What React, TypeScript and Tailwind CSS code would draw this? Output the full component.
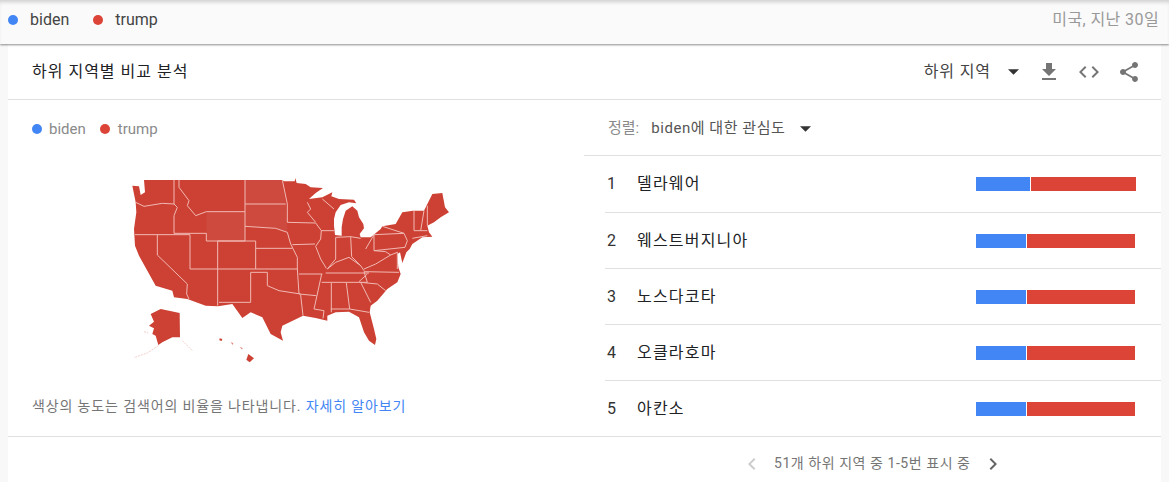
import React from "react";

const regions = [
  { name: "델라웨어", blue: 54, red: 105 },
  { name: "웨스트버지니아", blue: 50, red: 108 },
  { name: "노스다코타", blue: 50, red: 108 },
  { name: "오클라호마", blue: 50, red: 108 },
  { name: "아칸소", blue: 50, red: 108 },
];

const font = "font-['Roboto','Noto_Sans_CJK_KR',sans-serif]";

const Dot = ({ color }: { color: string }) => (
  <span className={`block w-[10px] h-[10px] rounded-full ${color}`} />
);

const Caret = () => (
  <svg width="11" height="6" viewBox="0 0 10 5" className="fill-[#333]">
    <path d="M0 0h10L5 5z" />
  </svg>
);

const stateLines = [
  "M165 33V105L175 115 165 140V193M50 100L75 112 130 103 165 105",
  "M180 33V55L210 95 205 110 230 140 262 128M48 197H213M165 193H262",
  "M262 128H378V216H262V193M378 33V128M378 105H500M490 33L505 105V160",
  "M378 172L470 178 505 190 515 225 535 265V300M296 216H410V300M410 238H520",
  "M115 197V258L205 345 203 375 210 390M213 197V300M296 216V410M213 300H535",
  "M395 310V400H300M395 310H445V350L480 365 545 375",
  "M505 160L590 162 607 185 605 210 590 232 605 270 622 298M520 227L588 225M540 315H610",
  "M565 100L575 120 565 130 590 160M607 185H645M650 205V270L625 300M610 90L645 120",
  "M535 300L540 375 592 380M545 378L552 440M585 420L615 425 612 448M608 315L595 375 585 420",
  "M620 312H750M608 340H745L735 308 840 310M720 338L745 315M625 300L650 280 690 265 725 290 735 305",
  "M650 205L695 203 725 208M695 203L698 263M765 197V245L800 248 815 258 770 285 735 300M725 290L698 263M740 240L765 197",
  "M637 342V430M682 342L692 420M635 420H692L750 430M725 340L775 345 800 365M725 340L755 400",
  "M765 197L855 193 865 215 858 235 765 245M790 172L855 193M885 125V185M915 125L905 185M925 110V170M885 185H925M880 208L925 200M835 250V300M815 258L835 250",
];

const UsMap = () => (
  <svg width="340" height="200" viewBox="0 0 1020 600" className="block">
    <path
      fill="#cd4134"
      d="M75 33H490L495 37H527L529 27 533 42 560 45 575 55 612 57 590 72 570 90 610 85 640 70 637 82 660 90 705 92 712 103 690 100 665 108 650 130 645 150 645 170 648 198 668 200 668 175 672 150 680 125 700 112 715 125 720 145 733 165 735 178 722 195 725 205 755 205 785 180 790 172 830 165 850 130 882 125H915L925 105 940 75 970 72 978 115 990 130 965 145 945 160 925 170 930 190 940 203 910 205 880 225 872 240 862 250 850 282 843 250 835 256 838 295 845 315 835 340 805 360 775 395 755 410 752 430 765 480 772 510 768 528 750 515 735 490 720 445 690 428 650 430 625 440 625 455 590 447 552 440 490 470 485 490 492 515 455 495 430 445 395 430 370 447 340 405 297 412 260 410 205 390 165 385 160 365 110 350 85 305 60 260 48 230 45 180 52 130 50 100 40 50 60 52 65 78 78 70Z"
    />
    <path
      fill="#cd4134"
      d="M95 435L125 420 182 432 183 505 160 505 130 520 118 528 110 500 100 495 105 478 90 470 105 458Z"
    />
    <path
      d="M118 530L85 552 45 566M190 515L220 545M75 488L88 492"
      fill="none"
      stroke="#eeb6b0"
      strokeWidth="2"
      strokeDasharray="6 3"
    />
    <path fill="#cd4134" d="M302 508L310 510 308 516 301 514ZM388 555L405 568 392 580 382 572Z" />
    <path fill="#e3867c" d="M335 520L343 522 341 528ZM362 533L372 538 368 541Z" />
    <path
      d="M378 33V105H500L490 33ZM262 128H378V216H262ZM378 105H500L505 160V190L470 178 378 172Z"
      fill="#ffffff"
      fillOpacity="0.05"
    />
    {stateLines.map((d) => (
      <path key={d} d={d} fill="none" stroke="#f0b9b3" strokeWidth="3" />
    ))}
  </svg>
);

export default function App() {
  return (
    <div className={`w-[1169px] h-[482px] overflow-hidden bg-[#f8f8f8] ${font}`}>
      {/* Top legend bar */}
      <div className="relative z-10 h-[44px] flex items-center justify-between pl-[8px] pr-[10px] bg-[#fafafa] shadow-[inset_0_4px_4px_-2px_rgba(0,0,0,0.18),0_1px_2px_rgba(0,0,0,0.45)]">
        <div className="flex items-center pb-[4px]">
          <Dot color="bg-[#4285f4]" />
          <span className="ml-[12px] text-[16px] text-[#444]">biden</span>
          <span className="ml-[24px]">
            <Dot color="bg-[#db4437]" />
          </span>
          <span className="ml-[12px] text-[16px] text-[#444]">trump</span>
        </div>
        <span className="text-[16px] tracking-[0.4px] text-[#999] pb-[5px]">미국, 지난 30일</span>
      </div>

      {/* Card */}
      <div className="mx-[8px] bg-white h-[438px]">
        <div className="h-[56px] flex items-center justify-between pl-[24px] pr-[20px] border-b border-[#e0e0e0]">
          <span className="text-[16px] tracking-[1px] text-[#202124]">하위 지역별 비교 분석</span>
          <div className="flex items-center">
            <span className="text-[16px] tracking-[0.9px] text-[#444]">하위 지역</span>
            <span className="ml-[17px]">
              <Caret />
            </span>
            <svg width="24" height="24" viewBox="0 0 24 24" className="ml-[18px] fill-[#757575]">
              <path d="M19 9h-4V3H9v6H5l7 7 7-7zM5 18v2h14v-2H5z" />
            </svg>
            <svg width="24" height="24" viewBox="0 0 24 24" className="ml-[16px] fill-[#757575]">
              <path d="M9.4 16.6L4.8 12l4.6-4.6L8 6l-6 6 6 6 1.4-1.4zm5.2 0l4.6-4.6-4.6-4.6L16 6l6 6-6 6-1.4-1.4z" />
            </svg>
            <svg width="24" height="24" viewBox="0 0 24 24" className="ml-[16px] fill-[#757575]">
              <path d="M18 16.08c-.76 0-1.44.3-1.96.77L8.91 12.7c.05-.23.09-.46.09-.7s-.04-.47-.09-.7l7.05-4.11c.54.5 1.25.81 2.04.81 1.66 0 3-1.34 3-3s-1.34-3-3-3-3 1.34-3 3c0 .24.04.47.09.7L8.04 9.81C7.5 9.31 6.79 9 6 9c-1.66 0-3 1.34-3 3s1.34 3 3 3c.79 0 1.5-.31 2.04-.81l7.12 4.16c-.05.21-.08.43-.08.65 0 1.61 1.31 2.92 2.92 2.92 1.61 0 2.92-1.31 2.92-2.92s-1.31-2.92-2.92-2.92z" />
            </svg>
          </div>
        </div>

        <div className="flex h-[337px] border-b border-[#e0e0e0]">
          {/* Map side */}
          <div className="w-[576px] flex flex-col pl-[24px]">
            <div className="flex items-center h-[20px] mt-[19px] text-[15px] text-[#8a8a8a]">
              <Dot color="bg-[#4285f4]" />
              <span className="ml-[7px]">biden</span>
              <span className="ml-[14px]">
                <Dot color="bg-[#db4437]" />
              </span>
              <span className="ml-[8px]">trump</span>
            </div>
            <div className="ml-[87px] mt-[30px]">
              <UsMap />
            </div>
            <p className="mt-[27px] text-[14px] tracking-[0.87px] text-[#757575]">
              색상의 농도는 검색어의 비율을 나타냅니다.{" "}
              <span className="text-[#4285f4]">자세히 알아보기</span>
            </p>
          </div>

          {/* Ranked list */}
          <div className="flex-1 flex flex-col">
            <div className="h-[56px] shrink-0 flex items-center pl-[24px] pt-[2px] border-b border-[#e0e0e0]">
              <span className="text-[15px] text-[#8a8a8a]">정렬:</span>
              <span className="ml-[12px] text-[15px] tracking-[0.55px] text-[#555]">biden에 대한 관심도</span>
              <span className="ml-[15px]">
                <Caret />
              </span>
            </div>
            <div className="pl-[21px]">
              {regions.map((r, i) => (
                <div
                  key={r.name}
                  className={`flex items-center pr-[25px] ${i === 0 ? "h-[57px]" : i === 4 ? "h-[55px]" : "h-[56px]"} ${i < 4 ? "border-b border-[#e0e0e0]" : ""}`}
                >
                  <span className="w-[32px] pl-[2px] text-[16px] text-[#333]">{i + 1}</span>
                  <span className="flex-1 text-[16px] tracking-[1.2px] text-[#202124]">{r.name}</span>
                  <div className="w-[160px] flex h-[14px]">
                    <div className="bg-[#4285f4]" style={{ width: r.blue }} />
                    <div className="ml-[1px] bg-[#db4437]" style={{ width: r.red }} />
                  </div>
                </div>
              ))}
            </div>
          </div>
        </div>

        {/* Pagination */}
        <div className="h-[45px] flex items-center pl-[732px] pt-[8px]">
          <svg width="24" height="24" viewBox="0 0 24 24" className="fill-[#ccc]">
            <path d="M15.4 7.4L14 6l-6 6 6 6 1.4-1.4L10.8 12z" />
          </svg>
          <span className="ml-[10px] text-[14px] tracking-[0.55px] text-[#757575]">51개 하위 지역 중 1-5번 표시 중</span>
          <svg width="24" height="24" viewBox="0 0 24 24" className="ml-[10px] fill-[#666]">
            <path d="M10 6L8.6 7.4l4.6 4.6-4.6 4.6L10 18l6-6z" />
          </svg>
        </div>
      </div>
    </div>
  );
}
